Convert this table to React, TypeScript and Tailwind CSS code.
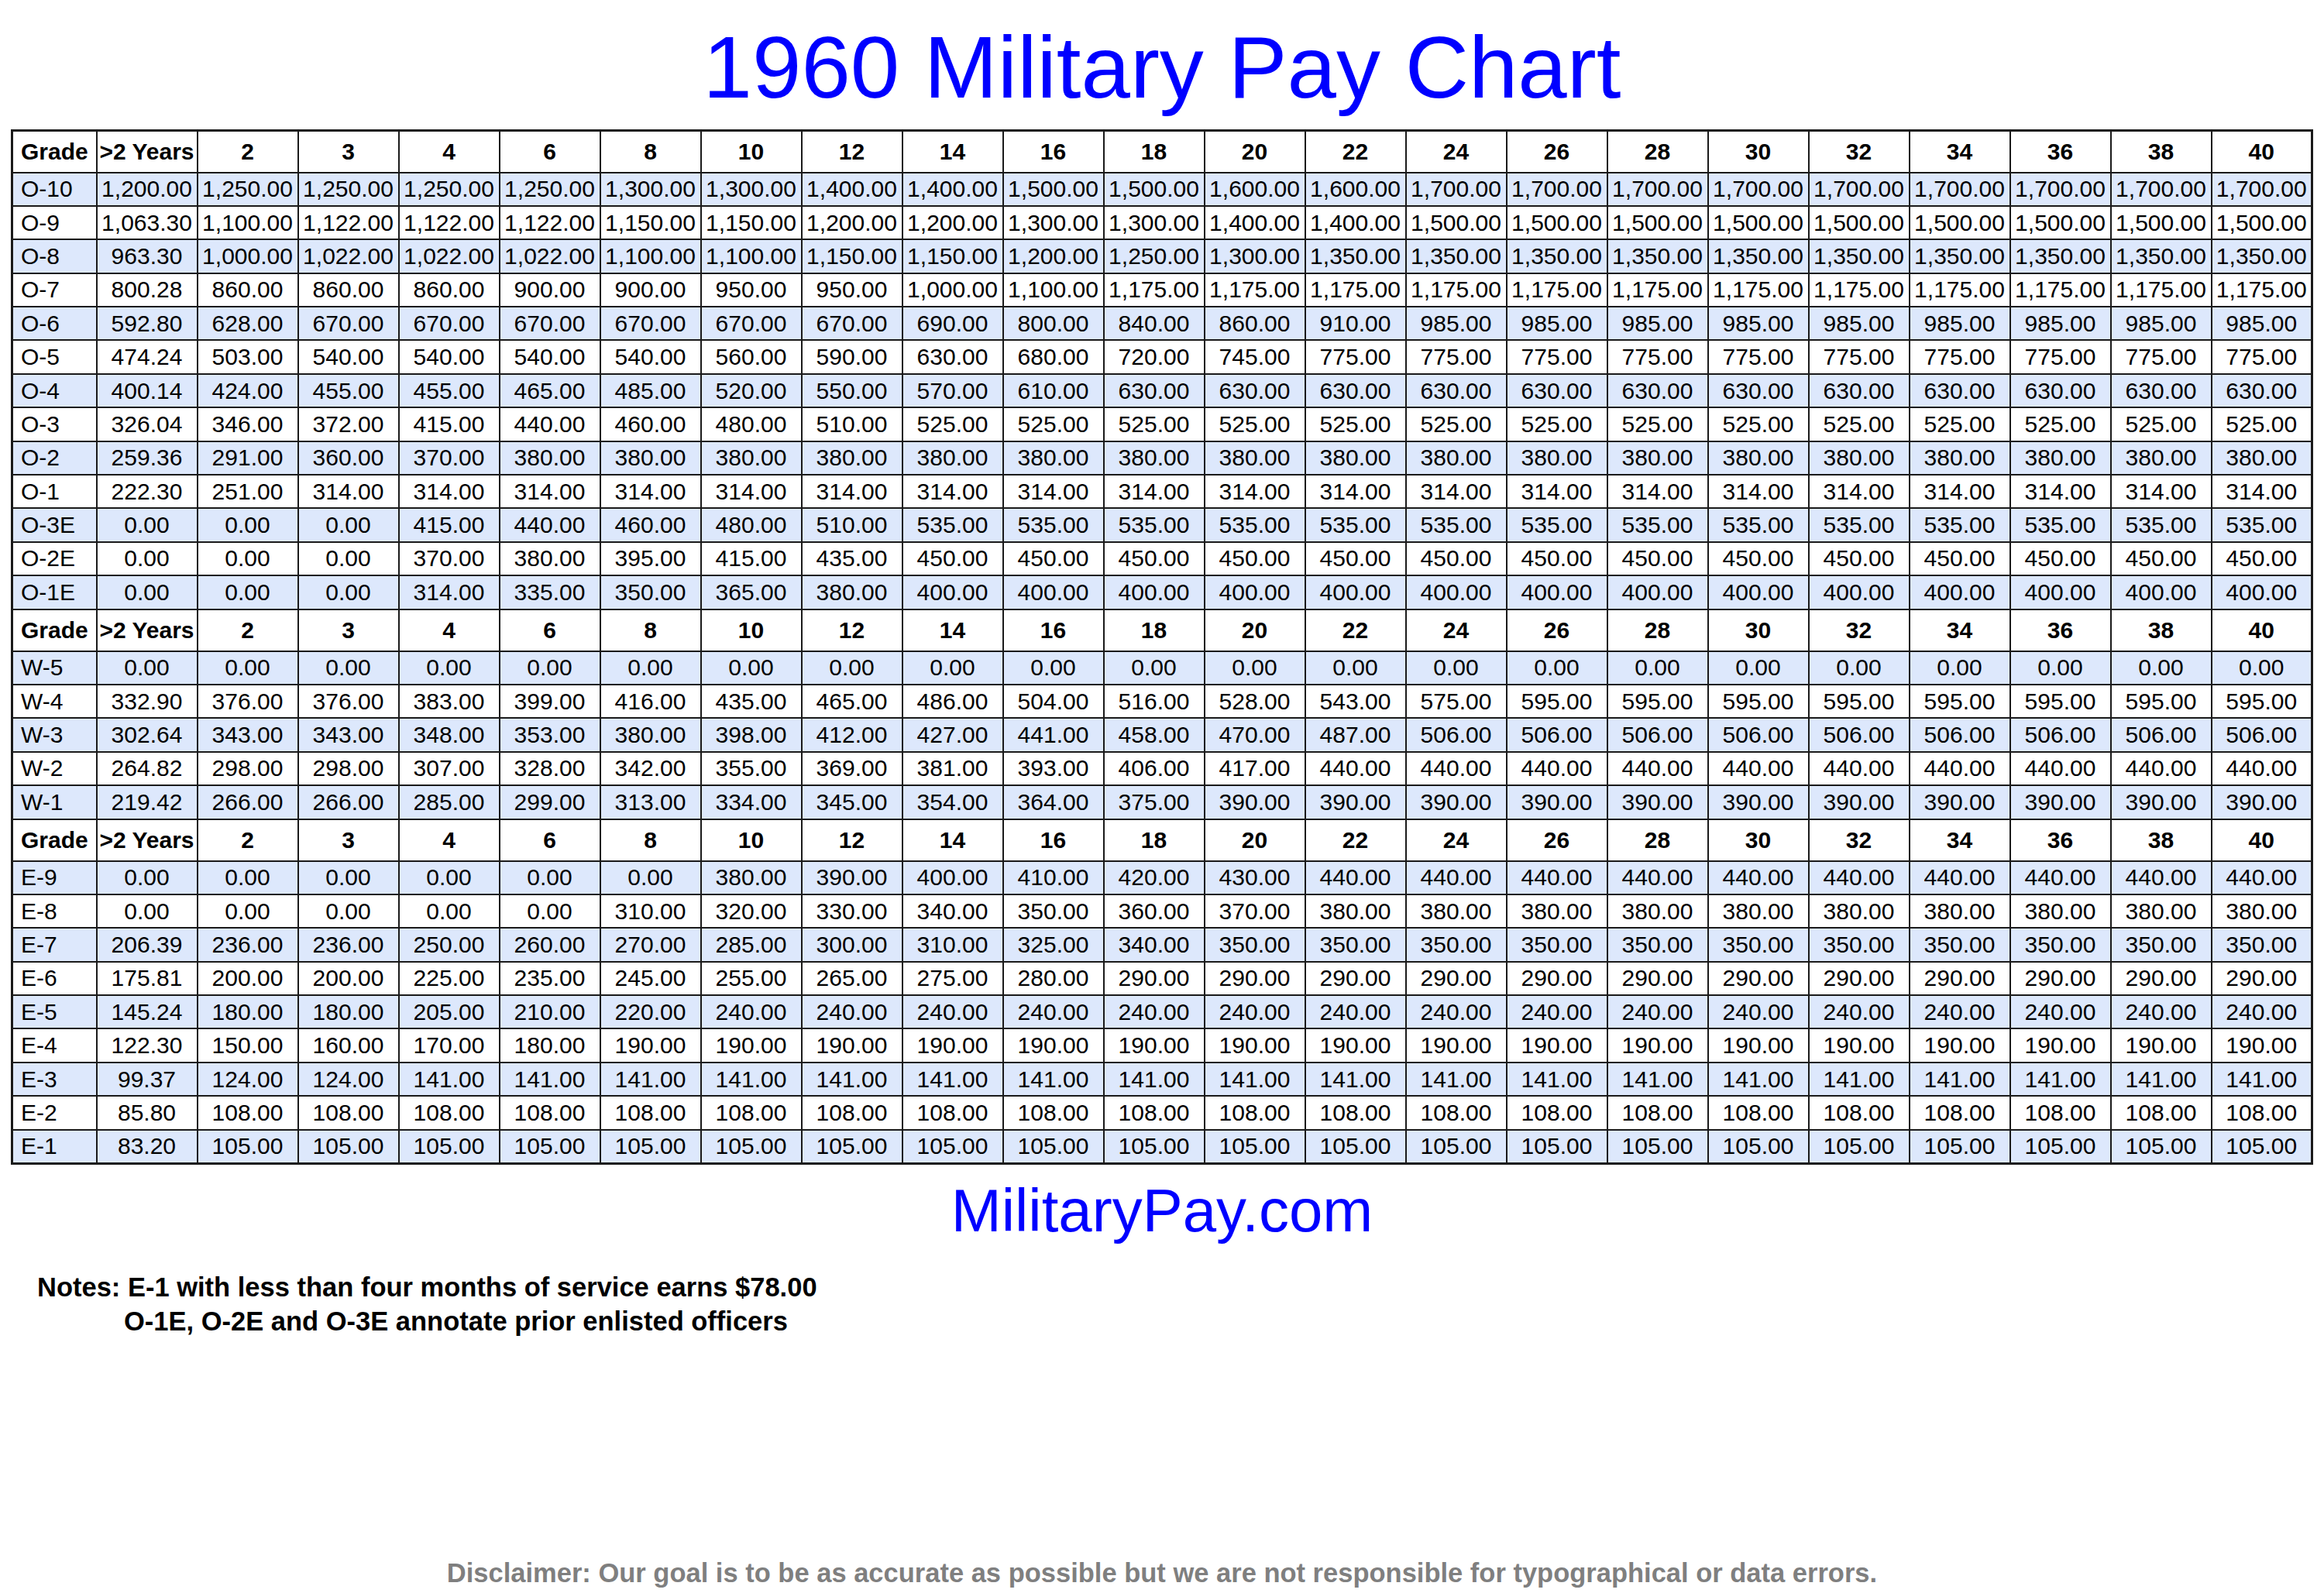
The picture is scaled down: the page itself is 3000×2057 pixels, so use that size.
const years = ["2", "3", "4", "6", "8", "10", "12", "14", "16", "18", "20", "22", "24", "26", "28", "30", "32", "34", "36", "38", "40"];

// pad the last value out to all 22 pay columns
function fill(vals: number[]) {
  const out = [...vals];
  while (out.length < 22) out.push(vals[vals.length - 1]);
  return out;
}

const fmt = (n: number) => n.toLocaleString("en-US", { minimumFractionDigits: 2, maximumFractionDigits: 2 });

const officers: [string, number[]][] = [
  ["O-10", fill([1200, 1250, 1250, 1250, 1250, 1300, 1300, 1400, 1400, 1500, 1500, 1600, 1600, 1700])],
  ["O-9", fill([1063.3, 1100, 1122, 1122, 1122, 1150, 1150, 1200, 1200, 1300, 1300, 1400, 1400, 1500])],
  ["O-8", fill([963.3, 1000, 1022, 1022, 1022, 1100, 1100, 1150, 1150, 1200, 1250, 1300, 1350])],
  ["O-7", fill([800.28, 860, 860, 860, 900, 900, 950, 950, 1000, 1100, 1175])],
  ["O-6", fill([592.8, 628, 670, 670, 670, 670, 670, 670, 690, 800, 840, 860, 910, 985])],
  ["O-5", fill([474.24, 503, 540, 540, 540, 540, 560, 590, 630, 680, 720, 745, 775])],
  ["O-4", fill([400.14, 424, 455, 455, 465, 485, 520, 550, 570, 610, 630])],
  ["O-3", fill([326.04, 346, 372, 415, 440, 460, 480, 510, 525])],
  ["O-2", fill([259.36, 291, 360, 370, 380])],
  ["O-1", fill([222.3, 251, 314])],
  ["O-3E", fill([0, 0, 0, 415, 440, 460, 480, 510, 535])],
  ["O-2E", fill([0, 0, 0, 370, 380, 395, 415, 435, 450])],
  ["O-1E", fill([0, 0, 0, 314, 335, 350, 365, 380, 400])],
];

const warrants: [string, number[]][] = [
  ["W-5", fill([0])],
  ["W-4", fill([332.9, 376, 376, 383, 399, 416, 435, 465, 486, 504, 516, 528, 543, 575, 595])],
  ["W-3", fill([302.64, 343, 343, 348, 353, 380, 398, 412, 427, 441, 458, 470, 487, 506])],
  ["W-2", fill([264.82, 298, 298, 307, 328, 342, 355, 369, 381, 393, 406, 417, 440])],
  ["W-1", fill([219.42, 266, 266, 285, 299, 313, 334, 345, 354, 364, 375, 390])],
];

const enlisted: [string, number[]][] = [
  ["E-9", fill([0, 0, 0, 0, 0, 0, 380, 390, 400, 410, 420, 430, 440])],
  ["E-8", fill([0, 0, 0, 0, 0, 310, 320, 330, 340, 350, 360, 370, 380])],
  ["E-7", fill([206.39, 236, 236, 250, 260, 270, 285, 300, 310, 325, 340, 350])],
  ["E-6", fill([175.81, 200, 200, 225, 235, 245, 255, 265, 275, 280, 290])],
  ["E-5", fill([145.24, 180, 180, 205, 210, 220, 240])],
  ["E-4", fill([122.3, 150, 160, 170, 180, 190])],
  ["E-3", fill([99.37, 124, 124, 141])],
  ["E-2", fill([85.8, 108])],
  ["E-1", fill([83.2, 105])],
];

function HeaderRow() {
  return (
    <tr className="h-[54px] bg-white">
      <th className="border-2 border-[#1a1a1a] pl-[10px] text-left font-bold">Grade</th>
      <th className="border-2 border-[#1a1a1a] font-bold whitespace-nowrap">&gt;2 Years</th>
      {years.map((y) => (
        <th key={y} className="border-2 border-[#1a1a1a] font-bold">{y}</th>
      ))}
    </tr>
  );
}

function Rows({ rows }: { rows: [string, number[]][] }) {
  return (
    <>
      {rows.map(([grade, vals], i) => (
        <tr key={grade} className={i % 2 === 0 ? "h-[43.4px] bg-[#dde8fc]" : "h-[43.4px] bg-white"}>
          <td className="border-2 border-[#1a1a1a] pl-[10px] text-left">{grade}</td>
          {vals.map((v, j) => (
            <td key={j} className="border-2 border-[#1a1a1a] text-center whitespace-nowrap">{fmt(v)}</td>
          ))}
        </tr>
      ))}
    </>
  );
}

export default function App() {
  return (
    <div className="flex min-h-[2057px] w-[3000px] flex-col bg-white font-['Liberation_Sans',Arial,sans-serif] text-black">
      <h1 className="pt-[30px] text-center text-[114px] leading-none text-[#0000ff]">1960 Military Pay Chart</h1>

      <table className="mx-auto mt-[23px] w-[2971px] table-fixed border-collapse border-[3px] border-[#1a1a1a] text-[30px] leading-none">
        <colgroup>
          <col className="w-[109px]" />
          {Array.from({ length: 22 }).map((_, i) => (
            <col key={i} className="w-[130px]" />
          ))}
        </colgroup>
        <tbody>
          <HeaderRow />
          <Rows rows={officers} />
          <HeaderRow />
          <Rows rows={warrants} />
          <HeaderRow />
          <Rows rows={enlisted} />
        </tbody>
      </table>

      <div className="mt-[20px] text-center text-[78px] leading-none text-[#0000ff]">MilitaryPay.com</div>

      <div className="mt-[38px] pl-[48px] text-[34.5px] font-bold leading-[44px]">
        <div>Notes: E-1 with less than four months of service earns $78.00</div>
        <div className="pl-[112px]">O-1E, O-2E and O-3E annotate prior enlisted officers</div>
      </div>

      <div className="mt-auto pb-[9px] text-center text-[34.5px] font-bold leading-none text-[#7f7f7f]">
        Disclaimer: Our goal is to be as accurate as possible but we are not responsible for typographical or data errors.
      </div>
    </div>
  );
}
